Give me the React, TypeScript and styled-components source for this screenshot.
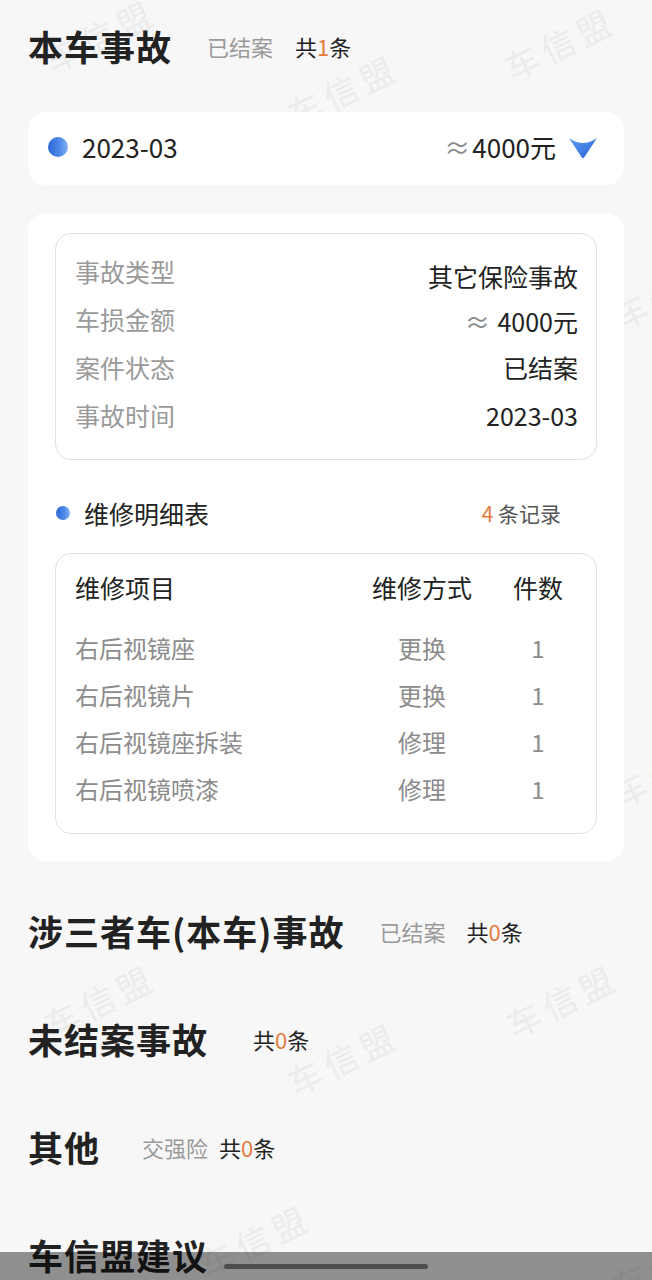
import React from "react";
import styled, { createGlobalStyle } from "styled-components";

const GlobalStyle = createGlobalStyle`
  html, body {
    margin: 0;
    padding: 0;
    background: #f7f7f7;
  }
  body {
    font-family: "Noto Sans CJK SC", "Noto Sans", sans-serif;
    color: #222;
  }
`;

const Page = styled.div`
  position: relative;
  min-height: 1280px;
  overflow: hidden;
  padding: 16px 28px 0;
  box-sizing: border-box;
`;

const WatermarkLayer = styled.div`
  position: absolute;
  inset: 0;
  z-index: 0;
  pointer-events: none;
`;

const Mark = styled.span`
  position: absolute;
  font-size: 34px;
  letter-spacing: 6px;
  font-weight: 400;
  color: #ebebeb;
  white-space: nowrap;
  transform: translate(-50%, -50%) rotate(-26deg);
`;

const Content = styled.div`
  position: relative;
  z-index: 1;
  display: flex;
  flex-direction: column;
`;

const Heading = styled.div<{ $top?: number }>`
  display: flex;
  align-items: center;
  height: 60px;
  margin-top: ${(p) => p.$top ?? 0}px;
`;

const Title = styled.h2<{ $gap: number }>`
  margin: 0 ${(p) => p.$gap}px 0 0;
  font-size: 35px;
  letter-spacing: 1px;
  font-weight: 700;
  color: #222;
  line-height: 60px;
`;

const Tag = styled.span<{ $gap?: number }>`
  font-size: 22px;
  color: #9a9a9a;
  margin-right: ${(p) => p.$gap ?? 0}px;
`;

const Count = styled.span`
  font-size: 22px;
  color: #222;
`;

const Num = styled.span`
  color: #e47a3e;
`;

const Card = styled.div`
  background: #fff;
  border-radius: 18px;
`;

const SummaryCard = styled(Card)`
  margin-top: 36px;
  height: 73px;
  box-sizing: border-box;
  display: flex;
  align-items: center;
  padding: 0 26px 4px 20px;
`;

const Dot = styled.span<{ $size: number }>`
  width: ${(p) => p.$size}px;
  height: ${(p) => p.$size}px;
  border-radius: 50%;
  background: linear-gradient(90deg, #2c68d8 0%, #4f8ae8 60%, #86b2f3 100%);
  flex-shrink: 0;
`;

const Month = styled.span`
  margin-left: 14px;
  font-size: 26px;
  color: #222;
  flex: 1;
`;

const Amount = styled.span`
  font-size: 26px;
  color: #222;
`;

const Approx = styled.span`
  color: #8a8a8a;
  margin-right: 2px;
`;

const Chevron = styled.svg`
  margin-left: 12px;
  width: 30px;
  height: 24px;
`;

const DetailCard = styled(Card)`
  margin-top: 28px;
  padding: 20px 27px 27px;
`;

const Box = styled.div`
  border: 1px solid #e2e2e2;
  border-radius: 16px;
`;

const InfoBox = styled(Box)`
  padding: 13px 18px 20px 19px;
`;

const InfoRow = styled.div`
  display: flex;
  justify-content: space-between;
  align-items: center;
  height: 48px;
  font-size: 25px;
`;

const Label = styled.span`
  color: #9a9a9a;
`;

const Value = styled.span<{ $shift?: number }>`
  color: #222;
  position: relative;
  top: ${(p) => p.$shift ?? 0}px;
`;

const SubHead = styled.div`
  display: flex;
  align-items: center;
  height: 40px;
  margin-top: 33px;
  padding: 0 36px 0 1px;
`;

const SubTitle = styled.span`
  margin-left: 14px;
  font-size: 25px;
  color: #222;
  flex: 1;
`;

const Records = styled.span`
  font-size: 21px;
  color: #555;
`;

const TableBox = styled(Box)`
  margin-top: 20px;
  padding: 13px 33px 21px 19px;
`;

const Grid = styled.div<{ $head?: boolean }>`
  display: grid;
  grid-template-columns: 1fr 102px 50px;
  column-gap: 40px;
  align-items: center;
  height: ${(p) => (p.$head ? 40 : 47)}px;
  margin-bottom: ${(p) => (p.$head ? 17 : 0)}px;
  font-size: ${(p) => (p.$head ? 25 : 24)}px;
  color: ${(p) => (p.$head ? "#222" : "#8c8c8c")};
`;

const Cell = styled.span<{ $center?: boolean }>`
  text-align: ${(p) => (p.$center ? "center" : "left")};
  white-space: nowrap;
`;

const BottomBar = styled.div`
  position: fixed;
  left: 0;
  right: 0;
  bottom: 0;
  height: 28px;
  background: rgba(0, 0, 0, 0.42);
  z-index: 5;
  display: flex;
  justify-content: center;
  align-items: center;
`;

const Indicator = styled.span`
  width: 204px;
  height: 5px;
  border-radius: 3px;
  background: #4d4d4d;
`;

const marks = [
  [100, 35],
  [343, 90],
  [560, 43],
  [668, 292],
  [668, 770],
  [100, 1000],
  [562, 1000],
  [343, 1058],
  [255, 1240],
  [668, 1262],
];

const repairs = [
  ["右后视镜座", "更换", 1],
  ["右后视镜片", "更换", 1],
  ["右后视镜座拆装", "修理", 1],
  ["右后视镜喷漆", "修理", 1],
];

export default function App() {
  return (
    <>
      <GlobalStyle />
      <Page>
        <WatermarkLayer aria-hidden>
          {marks.map(([x, y], i) => (
            <Mark key={i} style={{ left: x, top: y }}>
              车信盟
            </Mark>
          ))}
        </WatermarkLayer>
        <Content>
          <Heading>
            <Title $gap={35}>本车事故</Title>
            <Tag $gap={22}>已结案</Tag>
            <Count>
              共<Num>1</Num>条
            </Count>
          </Heading>

          <SummaryCard>
            <Dot $size={20} />
            <Month>2023-03</Month>
            <Amount>
              <Approx>≈</Approx>4000元
            </Amount>
            <Chevron viewBox="0 0 30 24">
              <defs>
                <linearGradient id="chev" x1="0" y1="0" x2="1" y2="1">
                  <stop offset="0" stopColor="#5c9cf2" />
                  <stop offset="1" stopColor="#2a66d6" />
                </linearGradient>
              </defs>
              <path d="M1 3 Q15 13 29 3 L16.2 22.5 Q15 24 13.8 22.5 Z" fill="url(#chev)" />
            </Chevron>
          </SummaryCard>

          <DetailCard>
            <InfoBox>
              <InfoRow>
                <Label>事故类型</Label>
                <Value $shift={5}>其它保险事故</Value>
              </InfoRow>
              <InfoRow>
                <Label>车损金额</Label>
                <Value $shift={2}>
                  <Approx>≈ </Approx>4000元
                </Value>
              </InfoRow>
              <InfoRow>
                <Label>案件状态</Label>
                <Value>已结案</Value>
              </InfoRow>
              <InfoRow>
                <Label>事故时间</Label>
                <Value>2023-03</Value>
              </InfoRow>
            </InfoBox>

            <SubHead>
              <Dot $size={14} />
              <SubTitle>维修明细表</SubTitle>
              <Records>
                <Num>4</Num> 条记录
              </Records>
            </SubHead>

            <TableBox>
              <Grid $head>
                <Cell>维修项目</Cell>
                <Cell $center>维修方式</Cell>
                <Cell $center>件数</Cell>
              </Grid>
              {repairs.map(([name, way, n]) => (
                <Grid key={name as string}>
                  <Cell>{name}</Cell>
                  <Cell $center>{way}</Cell>
                  <Cell $center>{n}</Cell>
                </Grid>
              ))}
            </TableBox>
          </DetailCard>

          <Heading $top={40}>
            <Title $gap={35}>涉三者车(本车)事故</Title>
            <Tag $gap={21}>已结案</Tag>
            <Count>
              共<Num>0</Num>条
            </Count>
          </Heading>

          <Heading $top={48}>
            <Title $gap={45}>未结案事故</Title>
            <Count>
              共<Num>0</Num>条
            </Count>
          </Heading>

          <Heading $top={48}>
            <Title $gap={42}>其他</Title>
            <Tag $gap={11}>交强险</Tag>
            <Count>
              共<Num>0</Num>条
            </Count>
          </Heading>

          <Heading $top={48}>
            <Title $gap={0}>车信盟建议</Title>
          </Heading>
        </Content>
        <BottomBar>
          <Indicator />
        </BottomBar>
      </Page>
    </>
  );
}
